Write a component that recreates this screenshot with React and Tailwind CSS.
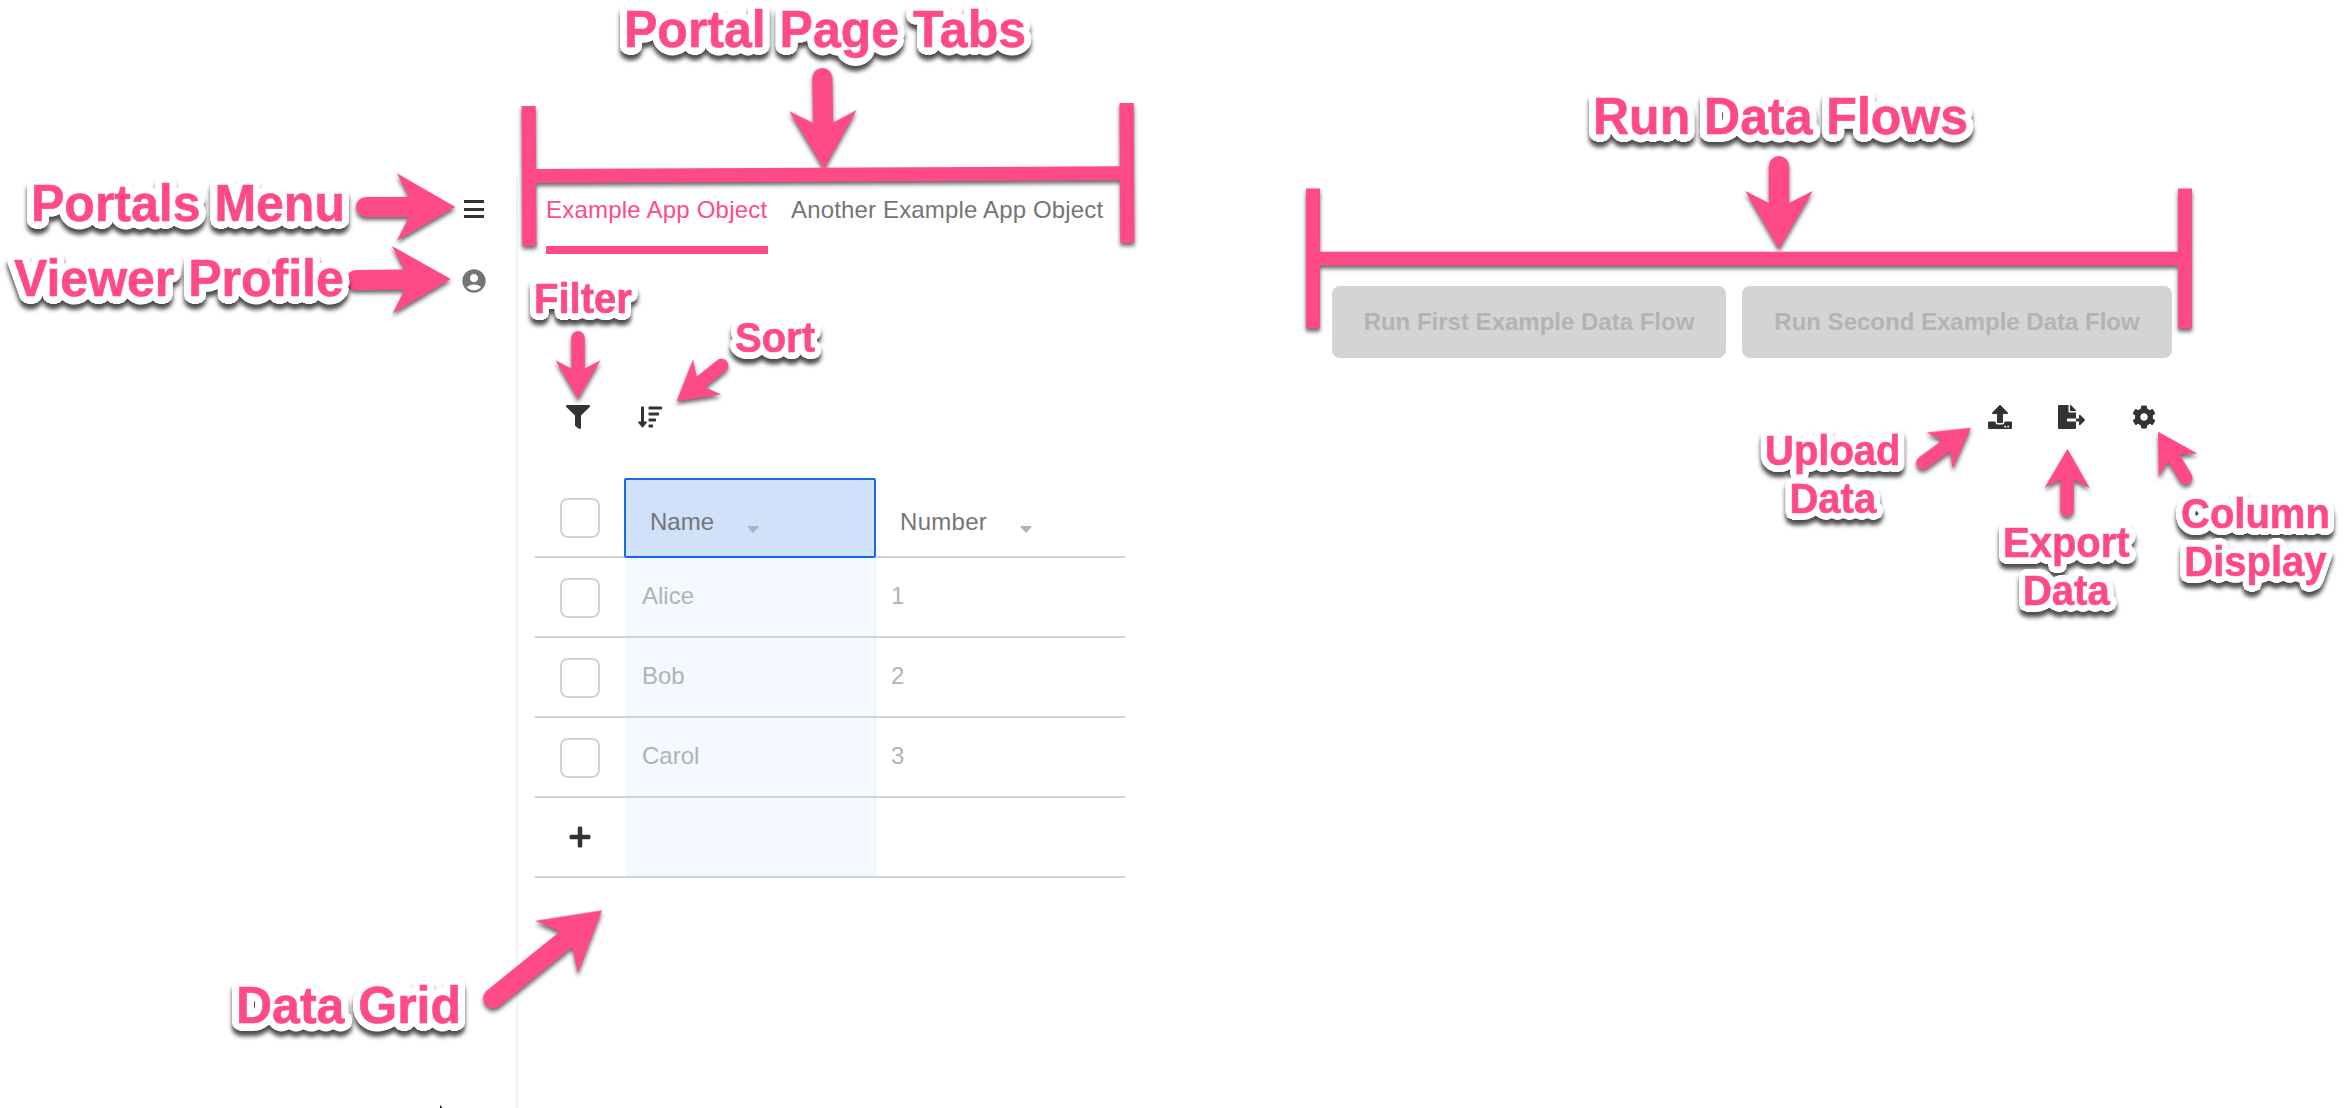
import React from "react";
import { FaCog, FaFileExport, FaFilter, FaPlus, FaSortAmountDown, FaUpload } from "react-icons/fa";
import { MdAccountCircle } from "react-icons/md";

// White outline around callout text: two rings of shadows.
function halo(radius) {
  const out = [];
  for (const r of [radius * 0.55, radius]) {
    for (let i = 0; i < 32; i++) {
      const a = (i / 32) * Math.PI * 2;
      out.push(`${(Math.cos(a) * r).toFixed(2)}px ${(Math.sin(a) * r).toFixed(2)}px 0 #fff`);
    }
  }
  return out.join(", ");
}
const LARGE_HALO = halo(7.3);
const SMALL_HALO = halo(6.5);

function Label({ large, className, children }) {
  const size = large
    ? "text-[50px] leading-[60px] origin-[0_47px]"
    : "text-[40px] leading-[46px] origin-[0_37px]";
  return (
    <div
      className={`absolute whitespace-nowrap text-center font-bold text-[#ff4a88] [-webkit-text-stroke:0.6px_#ff4a88] scale-y-[1.04] drop-shadow-[0_5px_2px_rgba(0,0,0,0.7)] ${size} ${className}`}
      style={{ textShadow: large ? LARGE_HALO : SMALL_HALO }}
    >
      {children}
    </div>
  );
}

// Arrow from its rounded tail end to its tip.
function Arrow({ from, to, s = 1 }) {
  const dx = to[0] - from[0];
  const dy = to[1] - from[1];
  const len = Math.hypot(dx, dy);
  const angle = (Math.atan2(dy, dx) * 180) / Math.PI;
  const w = 10.1 * s;
  const d = `M${-len + w} ${-w}L${-46.3 * s} ${-w}L${-58.4 * s} ${-33.7 * s}L0 0L${-58.4 * s} ${33.7 * s}L${-46.3 * s} ${w}L${-len + w} ${w}A${w} ${w} 0 0 1 ${-len + w} ${-w}Z`;
  return <path d={d} transform={`translate(${to[0]} ${to[1]}) rotate(${angle})`} />;
}

function Markers() {
  return (
    <svg className="absolute inset-0" width="2352" height="1108" fill="#ff4a88">
      <g className="drop-shadow-[0_3px_2px_rgba(0,0,0,0.6)]">
        <Arrow from={[356, 207]} to={[455.3, 207]} />
        <Arrow from={[346, 280.3]} to={[450.7, 279]} />
        <Arrow from={[822.2, 68]} to={[823.9, 169]} />
        <Arrow from={[1779, 156]} to={[1779, 249.3]} />
        <Arrow from={[485.5, 1004.6]} to={[602, 910.3]} />
        <Arrow from={[578, 331]} to={[578, 399.3]} s={0.667} />
        <Arrow from={[726.8, 361.2]} to={[676.7, 401.3]} s={0.667} />
        <Arrow from={[1917.5, 466.8]} to={[1971.1, 427.7]} s={0.667} />
        <Arrow from={[2067, 516.7]} to={[2067.5, 449]} s={0.667} />
        <Arrow from={[2189.2, 483.5]} to={[2158, 431.7]} s={0.667} />
        <path d="M521.5 106H535.7L536.5 246H522.3Z" />
        <path d="M1119.5 103H1133.7L1134.5 243H1120.3Z" />
        <path d="M535 169L1121 166.3V180.3L535 183Z" />
        <path d="M1306 188.4H1320V328.6H1306Z" />
        <path d="M2178 188.4H2192V328.6H2178Z" />
        <path d="M1319 251.7H2179V265.5H1319Z" />
      </g>
      <path d="M440 1105L442.5 1108H440Z" fill="#111" />
    </svg>
  );
}

function Checkbox() {
  return <span className="block h-10 w-10 rounded-lg border-2 border-[#d3d3d3] bg-white" />;
}

function Caret({ className }) {
  return (
    <svg width="12" height="7" viewBox="0 0 12 7" fill="#b3b3b3" className={className}>
      <path d="M1 0H11Q12 .3 11.5 1L6.6 6.5Q6 7 5.4 6.5L.5 1Q0 .3 1 0Z" />
    </svg>
  );
}

const rows = [
  ["Alice", "1"],
  ["Bob", "2"],
  ["Carol", "3"],
  null,
];

function DataGrid() {
  return (
    <div className="ml-[17px] w-[590px] text-[#b3b3b3]">
      <div className="flex h-20">
        <div className="flex w-[89px] justify-center border-b-2 border-[#d3d3d3] pt-5">
          <Checkbox />
        </div>
        <div className="flex w-[252px] rounded-[2px] border-2 border-[#156be4] bg-[#d0e1f9] pl-6 pt-7 text-[#757575]">
          <span className="leading-7">Name</span>
          <Caret className="ml-[33px] mt-[18px]" />
        </div>
        <div className="flex w-[249px] border-b-2 border-[#d3d3d3] pl-6 pt-[30px] text-[#757575]">
          <span className="leading-7 tracking-[0.3px]">Number</span>
          <Caret className="ml-[33px] mt-[18px]" />
        </div>
      </div>
      {rows.map((row, i) => (
        <div key={i} className="flex h-20">
          <div className="flex w-[91px] justify-center border-b-2 border-[#d3d3d3] pr-[2px] pt-5">
            {row ? <Checkbox /> : <FaPlus size={24} className="mt-[7px] text-[#333]" />}
          </div>
          <div className="w-[250px] border-b-2 border-b-[#d3d3d3] bg-[#f4f8ff] pl-4 pt-6 leading-7 shadow-[inset_-1px_0_#eeeff3]">
            {row && row[0]}
          </div>
          <div className="w-[249px] border-b-2 border-[#d3d3d3] pl-[15px] pt-6 leading-7">
            {row && row[1]}
          </div>
        </div>
      ))}
    </div>
  );
}

export default function App() {
  return (
    <div className="relative flex h-[1108px] w-[2352px] overflow-hidden bg-white font-['Liberation_Sans',Arial,sans-serif] text-2xl">
      <aside className="flex w-[518px] flex-col pt-44">
        <div className="flex flex-1 flex-col items-end border-r-2 border-[#f2f2f2] pr-[29px] pt-6">
          <div className="mr-[3px] flex h-[18px] w-5 flex-col justify-between">
            <i className="h-[3px] bg-[#333]" />
            <i className="h-[3px] bg-[#333]" />
            <i className="h-[3px] bg-[#333]" />
          </div>
          <MdAccountCircle size={28} className="mt-[49px] -mr-px text-[#757575]" />
        </div>
      </aside>

      <main className="flex w-[1834px] flex-col">
        <nav className="flex gap-6 pl-7 pt-[196px]">
          <div className="h-[58px] w-[222px] border-b-8 border-[#ff4a88] leading-7 tracking-[0.22px] whitespace-nowrap text-[#ff4a88]">
            Example App Object
          </div>
          <div className="-ml-px leading-7 tracking-[0.16px] text-[#757575]">Another Example App Object</div>
        </nav>

        <div className="mt-8 flex h-[72px] gap-4 pl-[814px] font-bold text-[#b3b3b3]">
          <div className="flex w-[394px] items-center justify-center rounded-lg bg-[#d4d4d4]">
            Run First Example Data Flow
          </div>
          <div className="flex w-[430px] items-center justify-center rounded-lg bg-[#d4d4d4]">
            Run Second Example Data Flow
          </div>
        </div>

        <div className="mt-[47px] flex h-6 justify-between pl-12 pr-[196px] text-[#333]">
          <div className="flex gap-12">
            <FaFilter size={24} />
            <FaSortAmountDown size={24} />
          </div>
          <div className="flex">
            <FaUpload size={24} />
            <FaFileExport className="ml-[46px] h-6 w-[27px]" />
            <FaCog size={24} className="ml-[47px]" />
          </div>
        </div>

        <div className="mt-[49px]">
          <DataGrid />
        </div>
      </main>

      <Markers />

      <Label large className="left-[31px] top-[174px]">Portals Menu</Label>
      <Label large className="left-[14px] top-[249px]">Viewer Profile</Label>
      <Label large className="left-[624px] top-0">Portal Page Tabs</Label>
      <Label large className="left-[1593px] top-[87px]">Run Data Flows</Label>
      <Label large className="left-[236px] top-[976px]">Data Grid</Label>
      <Label className="left-[534px] top-[276px]">Filter</Label>
      <Label className="left-[735px] top-[315px]">Sort</Label>
      <Label className="left-[1765px] top-[428px]">Upload<br />Data</Label>
      <Label className="left-[2003px] top-[520px]">Export<br />Data</Label>
      <Label className="left-[2181px] top-[491px]">Column<br />Display</Label>
    </div>
  );
}
